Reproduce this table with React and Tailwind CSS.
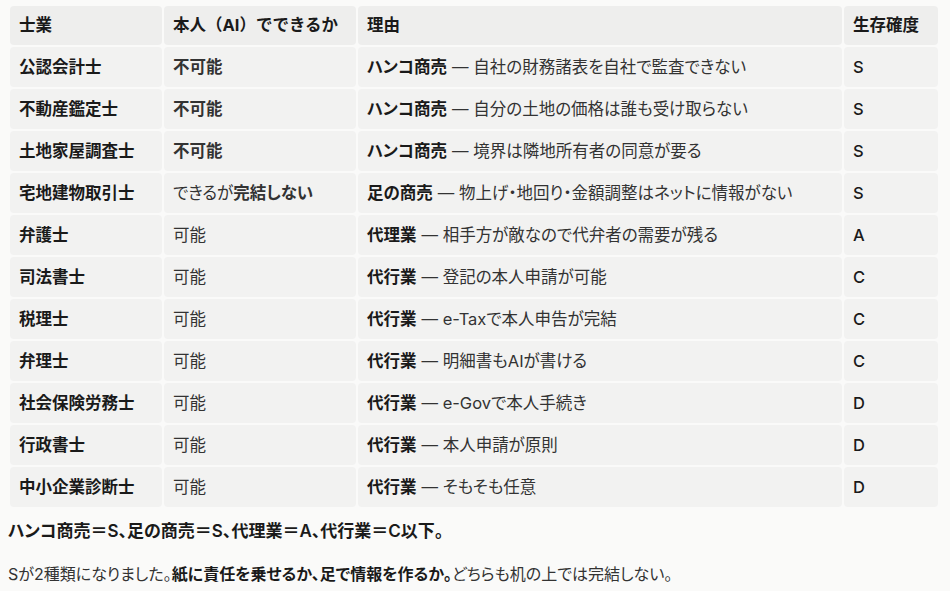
const rows = [
  { name: "公認会計士", can: <b className="font-bold">不可能</b>, kind: "ハンコ商売", reason: "自社の財務諸表を自社で監査できない", rank: "S" },
  { name: "不動産鑑定士", can: <b className="font-bold">不可能</b>, kind: "ハンコ商売", reason: "自分の土地の価格は誰も受け取らない", rank: "S" },
  { name: "土地家屋調査士", can: <b className="font-bold">不可能</b>, kind: "ハンコ商売", reason: "境界は隣地所有者の同意が要る", rank: "S" },
  {
    name: "宅地建物取引士",
    can: (
      <>
        できるが<b className="font-bold">完結しない</b>
      </>
    ),
    kind: "足の商売",
    reason: "物上げ・地回り・金額調整はネットに情報がない",
    rank: "S",
  },
  { name: "弁護士", can: "可能", kind: "代理業", reason: "相手方が敵なので代弁者の需要が残る", rank: "A" },
  { name: "司法書士", can: "可能", kind: "代行業", reason: "登記の本人申請が可能", rank: "C" },
  { name: "税理士", can: "可能", kind: "代行業", reason: "e-Taxで本人申告が完結", rank: "C" },
  { name: "弁理士", can: "可能", kind: "代行業", reason: "明細書もAIが書ける", rank: "C" },
  { name: "社会保険労務士", can: "可能", kind: "代行業", reason: "e-Govで本人手続き", rank: "D" },
  { name: "行政書士", can: "可能", kind: "代行業", reason: "本人申請が原則", rank: "D" },
  { name: "中小企業診断士", can: "可能", kind: "代行業", reason: "そもそも任意", rank: "D" },
];

const cell = "bg-[#f2f2f1] rounded-[4px] flex items-center px-[9px] h-[40px] whitespace-nowrap";
const head = "bg-[#eeeeed] rounded-[4px] flex items-center px-[9px] h-[39px] font-bold whitespace-nowrap";

export default function App() {
  return (
    <div className="min-h-screen bg-[#fafaf9] text-[#1a1a1a] text-[16.5px] font-['Inter','Noto_Sans_CJK_JP',sans-serif] [font-feature-settings:'palt']">
      <div className="pt-[6px] pl-[10px]">
        <div className="grid grid-cols-[152px_192px_484px_94px] gap-[2px]">
          <div className={head}>士業</div>
          <div className={head + " [font-feature-settings:normal]"}>本人（AI）でできるか</div>
          <div className={head}>理由</div>
          <div className={head}>生存確度</div>
          {rows.map((r) => (
            <div key={r.name} className="contents">
              <div className={cell + " font-bold"}>{r.name}</div>
              <div className={cell + " text-[#333]"}>{r.can}</div>
              <div className={cell + " text-[#333]"}>
                <b className="font-bold text-[#1a1a1a]">{r.kind}</b>
                <span className="ml-[5px]">— {r.reason}</span>
              </div>
              <div className={cell + " font-medium"}>{r.rank}</div>
            </div>
          ))}
        </div>
      </div>
      <div className="pl-[8px] pt-[13px] leading-[22px]">
        <p className="font-semibold text-[17px]">ハンコ商売＝S、足の商売＝S、代理業＝A、代行業＝C以下。</p>
        <p className="mt-[21px] text-[16px] text-[#333]">
          Sが2種類になりました。<b className="font-semibold text-[#1a1a1a]">紙に責任を乗せるか、足で情報を作るか。</b>どちらも机の上では完結しない。
        </p>
      </div>
    </div>
  );
}
